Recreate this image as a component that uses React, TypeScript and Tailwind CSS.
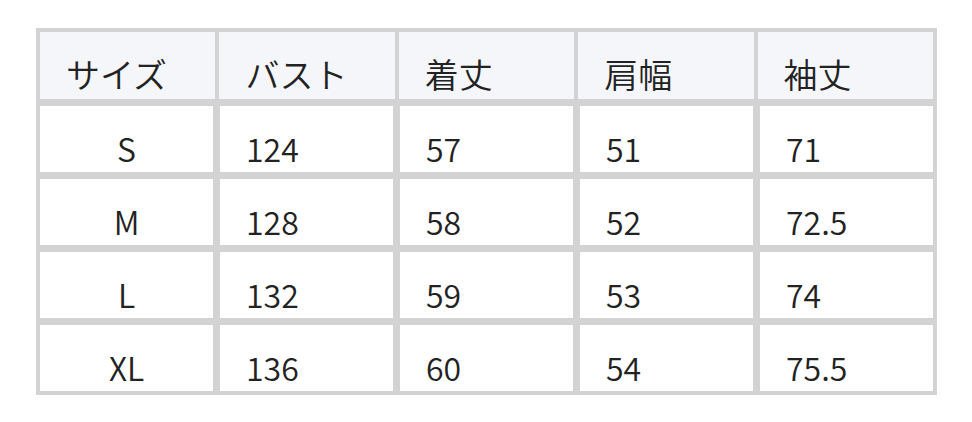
const headers = ["サイズ", "バスト", "着丈", "肩幅", "袖丈"];

const rows = [
  ["S", "124", "57", "51", "71"],
  ["M", "128", "58", "52", "72.5"],
  ["L", "132", "59", "53", "74"],
  ["XL", "136", "60", "54", "75.5"],
];

export default function App() {
  return (
    <div
      className="min-h-screen bg-white pl-[36px] pt-[28px] text-[#222222]"
      style={{ fontFamily: '"Noto Sans CJK JP", "Noto Sans", sans-serif' }}
    >
      <div className="flex w-[901px] flex-col gap-y-[7px] border-4 border-[#d3d3d3] bg-[#d3d3d3]">
        {/* header */}
        <div className="grid h-[67px] grid-cols-5 gap-x-[4px]">
          {headers.map((h) => (
            <div key={h} className="bg-[#f5f6fa] pl-[26px] pt-[19px] text-[34px] font-[350] leading-[46px]">
              {h}
            </div>
          ))}
        </div>

        {/* body */}
        {rows.map((r, i) => (
          <div key={i} className="grid h-[66px] grid-cols-5 gap-x-[7px]">
            {r.map((c, j) => (
              <div
                key={j}
                className={
                  j === 0
                    ? "bg-white pt-[19px] text-center text-[32px] font-[350] leading-[46px]"
                    : "bg-white pl-[26px] pt-[19px] text-[32px] font-[350] leading-[46px]"
                }
              >
                {c}
              </div>
            ))}
          </div>
        ))}
      </div>
    </div>
  );
}
